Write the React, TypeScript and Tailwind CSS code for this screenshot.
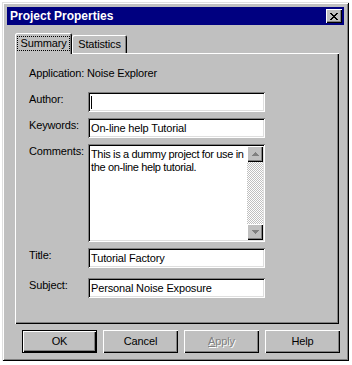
import React from "react";

const raised =
  "shadow-[inset_1px_1px_#ffffff,inset_-1px_-1px_#000000,inset_-2px_-2px_#808080]";
const sunken =
  "shadow-[inset_1px_1px_#808080,inset_-1px_-1px_#ffffff,inset_2px_2px_#000000,inset_-2px_-2px_#dfdfdf]";

function Field({ label, children, h = "h-[20px]" }: { label: string; children?: React.ReactNode; h?: string }) {
  return (
    <div className="flex">
      <div className="w-[59px] pt-[1px] leading-[13px] whitespace-nowrap">{label}</div>
      <div className={`w-[177px] ${h} bg-white ${sunken} flex items-center pl-[3px] pt-[1px] leading-[13px] whitespace-nowrap overflow-hidden`}>
        {children}
      </div>
    </div>
  );
}

function Btn({ children, def = false }: { children: React.ReactNode; def?: boolean }) {
  return (
    <div
      className={`w-[75px] h-[23px] flex items-center justify-center leading-[13px] ${
        def
          ? "border border-black shadow-[inset_1px_1px_#ffffff,inset_-1px_-1px_#000000,inset_-2px_-2px_#808080]"
          : raised
      }`}
    >
      {children}
    </div>
  );
}

function Arrow({ up }: { up: boolean }) {
  return (
    <div className={`w-[16px] h-[16px] bg-[#c0c0c0] ${raised} flex items-center justify-center`}>
      <svg width="7" height="4" viewBox="0 0 7 4" shapeRendering="crispEdges">
        {up ? (
          <path d="M3 0h1v1h1v1h1v1h1v1H0V3h1V2h1V1h1z" fill="#808080" />
        ) : (
          <path d="M0 0h7v1H6v1H5v1H4v1H3V3H2V2H1V1H0z" fill="#808080" />
        )}
      </svg>
    </div>
  );
}

export default function App() {
  return (
    <div className="w-[352px] h-[365px] bg-white overflow-hidden font-['Liberation_Sans',Arial,sans-serif] text-[11px] tracking-[-0.15px] text-black">
      <div className="ml-[2px] mt-[2px] w-[347px] h-[359px] bg-[#c0c0c0] p-[5px] flex flex-col shadow-[inset_1px_1px_#dfdfdf,inset_-1px_-1px_#000000,inset_2px_2px_#ffffff,inset_-2px_-2px_#808080]">
        {/* Title bar */}
        <div className="h-[18px] bg-[#000080] flex items-center justify-between pl-[3px] pr-[2px]">
          <span className="text-white font-bold text-[12px] leading-[14px] tracking-normal">Project Properties</span>
          <div className={`w-[16px] h-[14px] bg-[#c0c0c0] ${raised} flex items-center justify-center`}>
            <svg width="8" height="7" viewBox="0 0 8 7" shapeRendering="crispEdges">
              <path
                d="M0 0h2v1h1v1h2V1h1V0h2v1H7v1H6v1H5v1h1v1h1v1h1v1H6V6H5V5H3v1H2v1H0V6h1V5h1V4h1V3H2V2H1V1H0z"
                fill="#000"
              />
            </svg>
          </div>
        </div>

        {/* Tabs + panel */}
        <div className="mt-[8px] ml-[8px]">
          <div className="flex items-end h-[20px]">
            <div className="relative z-10 w-[57px] h-[21px] -mb-[1px] bg-[#c0c0c0] rounded-t-[2px] shadow-[inset_1px_1px_#ffffff,inset_-1px_0_#000000,inset_-2px_0_#808080] flex items-start justify-center pt-[3px]">
              <span className="border border-dotted border-black px-[2px] leading-[13px]">Summary</span>
            </div>
            <div className="w-[55px] h-[18px] rounded-t-[2px] shadow-[inset_1px_1px_#ffffff,inset_-1px_0_#000000,inset_-2px_0_#808080] flex items-start justify-center pt-[3px]">
              <span className="leading-[13px]">Statistics</span>
            </div>
          </div>
          <div className="w-[324px] h-[271px] shadow-[inset_1px_1px_#ffffff,inset_-1px_-1px_#000000,inset_-2px_-2px_#808080] pt-[14px] pl-[14px] flex flex-col">
            <div className="leading-[13px]">Application: Noise Explorer</div>
            <div className="mt-[12px] flex flex-col gap-[6px]">
              <Field label="Author:">
                <div className="w-[1px] h-[13px] bg-black" />
              </Field>
              <Field label="Keywords:">On-line help Tutorial</Field>
              <div className="flex">
                <div className="w-[59px] pt-[1px] leading-[13px]">Comments:</div>
                <div className={`w-[177px] h-[98px] bg-white ${sunken} p-[2px] flex`}>
                  <div className="flex-1 pl-[1px] pt-[2px] leading-[13px] whitespace-nowrap overflow-hidden tracking-[-0.35px]">
                    <div>This is a dummy project for use in</div>
                    <div>the on-line help tutorial.</div>
                  </div>
                  <div className="w-[16px] flex flex-col bg-[image:repeating-conic-gradient(#c0c0c0_0%_25%,#ffffff_0%_50%)] bg-[length:2px_2px]">
                    <Arrow up />
                    <div className="flex-1" />
                    <Arrow up={false} />
                  </div>
                </div>
              </div>
              <Field label="Title:">Tutorial Factory</Field>
              <div className="mt-[4px]">
                <Field label="Subject:">Personal Noise Exposure</Field>
              </div>
            </div>
          </div>
        </div>

        {/* Buttons */}
        <div className="mt-[6px] ml-[15px] flex gap-[6px]">
          <Btn def>OK</Btn>
          <Btn>Cancel</Btn>
          <Btn>
            <span className="text-[#808080] [text-shadow:1px_1px_#ffffff]">
              <span className="underline">A</span>pply
            </span>
          </Btn>
          <Btn>Help</Btn>
        </div>
      </div>
    </div>
  );
}
